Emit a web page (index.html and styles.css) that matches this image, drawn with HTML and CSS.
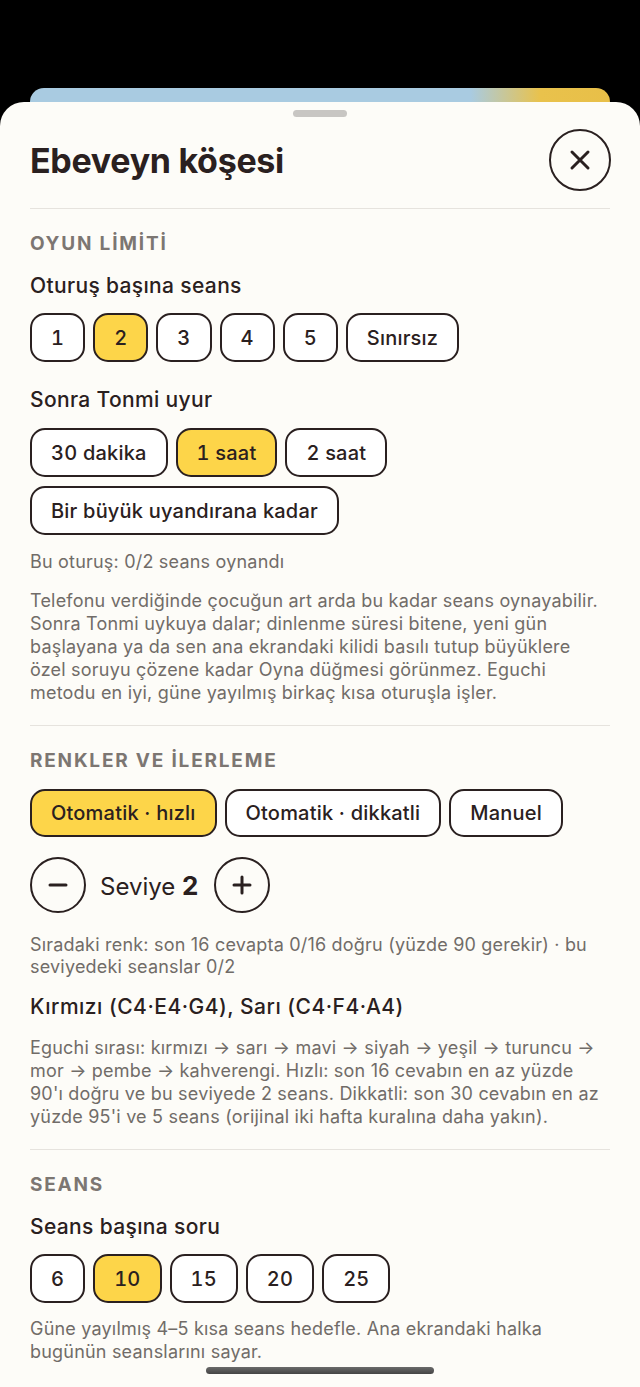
FILE: index.html
```html
<!DOCTYPE html>
<html lang="tr">
<head>
  <meta charset="UTF-8" />
  <meta name="viewport" content="width=device-width, initial-scale=1.0"/>
  <title>Ebeveyn köşesi</title>
  <link rel="stylesheet" href="styles.css">
</head>
<body>
  <div class="backdrop">
    <div class="peek"></div>
  </div>

  <div class="sheet">
    <div class="grabber"></div>

    <div class="header">
      <h1>Ebeveyn köşesi</h1>
      <button class="close" aria-label="Kapat">
        <svg width="22" height="22" viewBox="0 0 22 22">
          <path d="M3 3 L19 19 M19 3 L3 19" stroke="#2a2020" stroke-width="3" stroke-linecap="round" fill="none"/>
        </svg>
      </button>
    </div>

    <div class="section">
      <div class="section-label">OYUN LİMİTİ</div>

      <div class="field-title">Oturuş başına seans</div>
      <div class="chips">
        <button class="chip">1</button>
        <button class="chip active">2</button>
        <button class="chip">3</button>
        <button class="chip">4</button>
        <button class="chip">5</button>
        <button class="chip">Sınırsız</button>
      </div>

      <div class="field-title spaced">Sonra Tonmi uyur</div>
      <div class="chips">
        <button class="chip">30 dakika</button>
        <button class="chip active">1 saat</button>
        <button class="chip">2 saat</button>
        <button class="chip">Bir büyük uyandırana kadar</button>
      </div>

      <p class="note status">Bu oturuş: 0/2 seans oynandı</p>
      <p class="note">Telefonu verdiğinde çocuğun art arda bu kadar seans oynayabilir. Sonra Tonmi uykuya dalar; dinlenme süresi bitene, yeni gün başlayana ya da sen ana ekrandaki kilidi basılı tutup büyüklere özel soruyu çözene kadar Oyna düğmesi görünmez. Eguchi metodu en iyi, güne yayılmış birkaç kısa oturuşla işler.</p>
    </div>

    <div class="section">
      <div class="section-label">RENKLER VE İLERLEME</div>

      <div class="chips mode">
        <button class="chip active">Otomatik · hızlı</button>
        <button class="chip">Otomatik · dikkatli</button>
        <button class="chip">Manuel</button>
      </div>

      <div class="stepper">
        <button class="round" aria-label="Azalt">
          <svg width="20" height="20" viewBox="0 0 20 20">
            <path d="M2 10 H18" stroke="#2a2020" stroke-width="3" stroke-linecap="round"/>
          </svg>
        </button>
        <span class="level">Seviye <b>2</b></span>
        <button class="round" aria-label="Artır">
          <svg width="20" height="20" viewBox="0 0 20 20">
            <path d="M2 10 H18 M10 2 V18" stroke="#2a2020" stroke-width="3" stroke-linecap="round"/>
          </svg>
        </button>
      </div>

      <p class="note progress">Sıradaki renk: son 16 cevapta 0/16 doğru (yüzde 90 gerekir) · bu seviyedeki seanslar 0/2</p>
      <div class="field-title colors">Kırmızı (C4·E4·G4), Sarı (C4·F4·A4)</div>
      <p class="note">Eguchi sırası: kırmızı → sarı → mavi → siyah → yeşil → turuncu → mor → pembe → kahverengi. Hızlı: son 16 cevabın en az yüzde 90'ı doğru ve bu seviyede 2 seans. Dikkatli: son 30 cevabın en az yüzde 95'i ve 5 seans (orijinal iki hafta kuralına daha yakın).</p>
    </div>

    <div class="section last">
      <div class="section-label">SEANS</div>

      <div class="field-title">Seans başına soru</div>
      <div class="chips">
        <button class="chip">6</button>
        <button class="chip active">10</button>
        <button class="chip">15</button>
        <button class="chip">20</button>
        <button class="chip">25</button>
      </div>

      <p class="note tight">Güne yayılmış 4–5 kısa seans hedefle. Ana ekrandaki halka bugünün seanslarını sayar.</p>
    </div>
  </div>

  <div class="home-indicator"></div>
</body>
</html>
```

FILE: styles.css
```css
body {
  font-family: Inter, "Noto Sans", sans-serif;
  margin: 0;
  padding: 0;
  background-color: #000;
  height: 1387px;
  overflow: hidden;
  color: #2a2020;
}

.backdrop {
  padding-top: 88px;
}

.peek {
  height: 14px;
  margin: 0 30px;
  border-radius: 14px 14px 0 0;
  background: linear-gradient(90deg, #a9cbe1 0%, #a9cbe1 76%, #e9c24c 88%, #e8bf48 100%);
}

.sheet {
  background-color: #fdfcf8;
  border-radius: 24px 24px 0 0;
  padding: 8px 30px 0;
  min-height: 1300px;
}

.grabber {
  width: 54px;
  height: 7px;
  margin: 0 auto;
  border-radius: 4px;
  background-color: #c8c6c3;
}

.header {
  display: flex;
  align-items: center;
  justify-content: space-between;
  margin-top: 12px;
  padding-bottom: 17px;
  border-bottom: 1px solid #e6e3de;
}

h1 {
  margin: 0;
  font-size: 34px;
  font-weight: 700;
  letter-spacing: -0.3px;
  color: #2a2020;
}

button {
  font-family: inherit;
  color: inherit;
  cursor: pointer;
}

.close {
  width: 62px;
  height: 62px;
  margin-right: -1px;
  border: 2px solid #2a2020;
  border-radius: 50%;
  background: transparent;
  display: flex;
  align-items: center;
  justify-content: center;
  padding: 0;
}

.section {
  padding: 24px 0 21px;
  border-bottom: 1px solid #e6e3de;
}

.section.last {
  border-bottom: none;
}

.section-label {
  font-size: 19px;
  line-height: 22px;
  font-weight: 700;
  letter-spacing: 1.8px;
  color: #7c7672;
}

.field-title {
  font-size: 21px;
  line-height: 24px;
  font-weight: 500;
  letter-spacing: 0.35px;
  margin-top: 19px;
  margin-bottom: 15px;
}

.field-title.spaced {
  margin-top: 26px;
  margin-bottom: 16px;
}

.field-title.colors {
  margin-top: 17px;
  margin-bottom: 17px;
  letter-spacing: 0.5px;
}

.chips {
  display: flex;
  flex-wrap: wrap;
  gap: 9px 8px;
}

.chips.mode {
  margin-top: 17px;
}

.chip {
  height: 49px;
  padding: 0 19px;
  font-size: 20px;
  font-weight: 500;
  letter-spacing: 0.2px;
  font-variant-numeric: tabular-nums;
  border: 2.5px solid #2a2020;
  border-radius: 15px;
  background-color: #fff;
}

.chip.active {
  background-color: #fdd549;
}

.chips.mode .chip {
  height: 48px;
}

.stepper {
  display: flex;
  align-items: center;
  gap: 14px;
  margin-top: 20px;
}

.round {
  width: 56px;
  height: 56px;
  border: 2px solid #2a2020;
  border-radius: 50%;
  background: transparent;
  display: flex;
  align-items: center;
  justify-content: center;
  padding: 0;
}

.level {
  font-size: 24px;
  margin-right: 2px;
}

.level b {
  font-size: 26px;
  font-weight: 700;
}

.note {
  margin: 16px 0 0;
  font-size: 18px;
  line-height: 23px;
  letter-spacing: 0.2px;
  color: #716c68;
}

.note.status {
  line-height: 22px;
}

.note.progress {
  margin-top: 21px;
  line-height: 22px;
}

.note.tight {
  margin-top: 14px;
}

.home-indicator {
  position: fixed;
  left: 206px;
  bottom: 13px;
  width: 228px;
  height: 7px;
  border-radius: 4px;
  background: linear-gradient(180deg, #6a6a6a, #444);
}
```
